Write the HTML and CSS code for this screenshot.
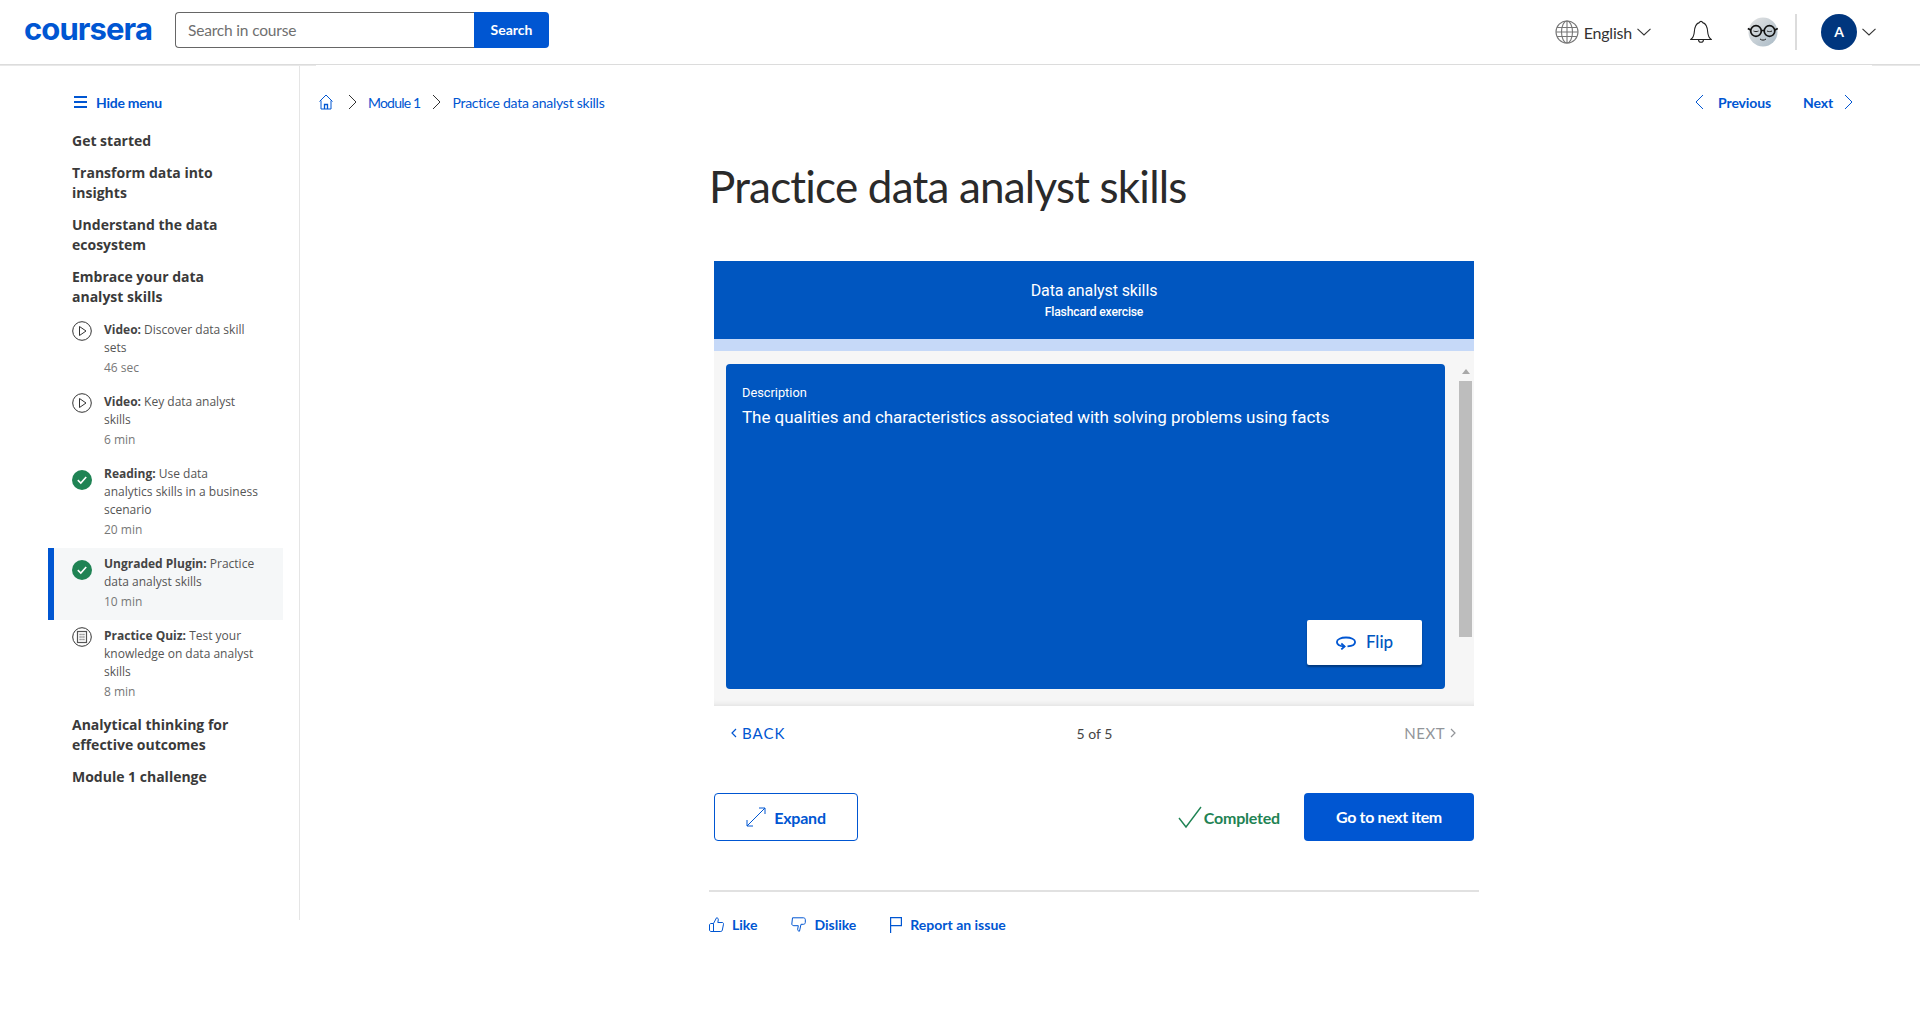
FILE: index.html
```html
<!DOCTYPE html>
<html lang="en">
<head>
    <meta charset="UTF-8">
    <title>Practice data analyst skills | Coursera</title>
    <link rel="stylesheet" href="styles.css">
</head>
<body>
    <header class="topbar">
        <div class="logo">coursera</div>
        <form class="search">
            <div class="search-input">Search in course</div>
            <div class="search-btn">Search</div>
        </form>
        <div class="top-right">
            <div class="lang">
                <svg width="24" height="24" viewBox="0 0 24 24" fill="none" stroke="#777" stroke-width="1.1"><circle cx="12" cy="12" r="11"/><ellipse cx="12" cy="12" rx="5.5" ry="11"/><path d="M12 1v22M2 7.5h20M1 12h22M2 16.5h20"/></svg>
                <span>English</span>
                <svg class="caret" width="14" height="8" viewBox="0 0 14 8" fill="none" stroke="#333" stroke-width="1.1"><path d="M.5.8 7 7l6.500-6.200"/></svg>
            </div>
            <svg class="bell" width="22" height="24" viewBox="0 0 22 24" fill="none" stroke="#222" stroke-width="1.1"><path d="M.8 19.500c2.500-2 3.200-3.500 3.500-7.500C4.600 7 6 3.500 9.300 2.600a1.800 1.800 0 0 1 3.400 0C16 3.500 17.400 7 17.700 12c.3 4 1 5.500 3.500 7.500z"/><path d="M8.500 19.500a2.500 2.800 0 0 0 5 0"/></svg>
            <svg class="coach" width="32" height="30" viewBox="0 0 32 30">
                <defs><linearGradient id="face" x1="0" y1="0" x2="1" y2="1"><stop offset="0" stop-color="#e4e4e4"/><stop offset="1" stop-color="#a9bac6"/></linearGradient></defs>
                <circle cx="16" cy="15" r="14.500" fill="url(#face)"/>
                <g fill="none" stroke="#111" stroke-width="1.700"><circle cx="9" cy="14" r="5.300"/><circle cx="22.500" cy="14" r="5.300"/><path d="M14.300 13.500h3M3.700 13 .8 11.500M27.800 13l3-1.500"/></g>
                <path d="M6.500 14c1.500.8 3.500.8 5 0M20 14c1.500.8 3.500.8 5 0M13 22c2 1.500 4 1.500 6 0" fill="none" stroke="#222" stroke-width="1"/>
            </svg>
            <div class="divider"></div>
            <div class="avatar">A</div>
            <svg class="caret-user" width="14" height="8" viewBox="0 0 14 8" fill="none" stroke="#333" stroke-width="1.1"><path d="M.5.8 7 7l6.500-6.200"/></svg>
        </div>
    </header>

    <div class="page">
        <aside class="sidebar">
            <div class="hide-menu">
                <svg width="13" height="12" viewBox="0 0 13 12" fill="#0056d2"><path d="M0 0h13v2H0zM0 5h13v2H0zM0 10h13v2H0z"/></svg>
                <span>Hide menu</span>
            </div>
            <div class="lesson">Get started</div>
            <div class="lesson">Transform data into insights</div>
            <div class="lesson">Understand the data ecosystem</div>
            <div class="lesson last">Embrace your data analyst skills</div>

            <div class="item">
                <svg class="item-icon" viewBox="0 0 20 20" fill="none" stroke="#333"><circle cx="10" cy="10" r="9.300"/><path d="M7.500 5.500v9l6.500-4.500z"/></svg>
                <div class="item-text"><p><b>Video:</b> Discover data skill sets</p><small>46 sec</small></div>
            </div>
            <div class="item">
                <svg class="item-icon" viewBox="0 0 20 20" fill="none" stroke="#333"><circle cx="10" cy="10" r="9.300"/><path d="M7.500 5.500v9l6.500-4.500z"/></svg>
                <div class="item-text"><p><b>Video:</b> Key data analyst skills</p><small>6 min</small></div>
            </div>
            <div class="item">
                <svg class="item-icon check" viewBox="0 0 20 20"><circle cx="10" cy="10" r="10" fill="#1f8354"/><path d="M5.800 10.200 8.800 13l5.400-6" fill="none" stroke="#fff" stroke-width="1.600"/></svg>
                <div class="item-text"><p><b>Reading:</b> Use data analytics skills in a business scenario</p><small>20 min</small></div>
            </div>
            <div class="item active">
                <svg class="item-icon check" viewBox="0 0 20 20"><circle cx="10" cy="10" r="10" fill="#1f8354"/><path d="M5.800 10.200 8.800 13l5.400-6" fill="none" stroke="#fff" stroke-width="1.600"/></svg>
                <div class="item-text"><p><b>Ungraded Plugin:</b> Practice data analyst skills</p><small>10 min</small></div>
            </div>
            <div class="item">
                <svg class="item-icon" viewBox="0 0 20 20" fill="none" stroke="#333"><circle cx="10" cy="10" r="9.300"/><rect x="5.500" y="4.500" width="9" height="11" stroke="#555" stroke-width="1.200"/><path d="M7.500 7.500h5M7.500 10h5M7.500 12.500h5" stroke="#777" stroke-width="1.300" stroke-dasharray="1.200 .7"/></svg>
                <div class="item-text"><p><b>Practice Quiz:</b> Test your knowledge on data analyst skills</p><small>8 min</small></div>
            </div>

            <div class="lesson after">Analytical thinking for effective outcomes</div>
            <div class="lesson">Module 1 challenge</div>
        </aside>

        <main class="content">
            <div class="crumbs">
                <nav class="breadcrumb">
                    <svg width="14" height="16" viewBox="0 0 14 16" fill="none" stroke="#0056d2"><path d="M.5 7.500 7 1l6.500 6.500M2 6.500v8.500h10V6.500"/><path d="M5.500 15v-4.500h3V15" stroke-width="1.300"/></svg>
                    <svg class="sep" width="9" height="16" viewBox="0 0 9 16" fill="none" stroke="#333"><path d="m1 1 7 7-7 7"/></svg>
                    <a class="module">Module 1</a>
                    <svg class="sep" width="9" height="16" viewBox="0 0 9 16" fill="none" stroke="#333"><path d="m1 1 7 7-7 7"/></svg>
                    <a>Practice data analyst skills</a>
                </nav>
                <div class="pager">
                    <a class="prev"><svg width="9" height="16" viewBox="0 0 9 16" fill="none" stroke="#0056d2"><path d="M8 1 1 8l7 7"/></svg>Previous</a>
                    <a class="following">Next<svg width="9" height="16" viewBox="0 0 9 16" fill="none" stroke="#0056d2"><path d="m1 1 7 7-7 7"/></svg></a>
                </div>
            </div>

            <div class="column">
                <h1>Practice data analyst skills</h1>

                <section class="player">
                    <div class="player-head">
                        <div class="player-title">Data analyst skills</div>
                        <div class="player-sub">Flashcard exercise</div>
                    </div>
                    <div class="progress"></div>
                    <div class="stage">
                        <div class="card">
                            <div class="card-label">Description</div>
                            <div class="card-text">The qualities and characteristics associated with solving problems using facts</div>
                            <div class="flip">
                                <svg width="20" height="14" viewBox="0 0 20 14" fill="none" stroke="#0056d2" stroke-width="1.800"><path d="M11.500 10.300c4.500-.3 7.600-2 7.600-4.400C19.100 3.300 15 1.500 10 1.500S.9 3.300.9 5.900c0 2.300 3 4.100 7.600 4.500"/><path d="m5.300 7.500 3.300 2.900-3.300 3"/></svg>
                                <span>Flip</span>
                            </div>
                        </div>
                        <div class="scroll">
                            <div class="scroll-arrow"></div>
                            <div class="scroll-thumb"></div>
                        </div>
                    </div>
                    <div class="player-nav">
                        <span class="back"><svg width="6" height="10" viewBox="0 0 6 10" fill="none" stroke="#0056d2" stroke-width="1.200"><path d="M5 1 1 5l4 4"/></svg>BACK</span>
                        <span class="count">5 of 5</span>
                        <span class="next">NEXT<svg width="6" height="10" viewBox="0 0 6 10" fill="none" stroke="#929599" stroke-width="1.200"><path d="m1 1 4 4-4 4"/></svg></span>
                    </div>
                </section>

                <div class="actions">
                    <div class="expand">
                        <svg width="20" height="20" viewBox="0 0 20 20" fill="none" stroke="#0056d2"><path d="M1 19 19 1M13 1h6v6M1 13v6h6"/></svg>
                        <span>Expand</span>
                    </div>
                    <div class="done">
                        <svg width="24" height="24" viewBox="0 0 24 24" fill="none" stroke="#1f8354" stroke-width="1.400"><path d="m1 13 7 9L23 2"/></svg>
                        <span>Completed</span>
                    </div>
                    <div class="go-next">Go to next item</div>
                </div>

                <div class="feedback">
                    <a><svg width="15" height="15" viewBox="0 0 15 15" fill="none" stroke="#0056d2"><path d="M4.500 6.500 7.500 .8c1.300 0 2 .9 1.800 2L8.800 5.500h4.500c1 0 1.400.9 1.200 1.700l-1.200 6c-.2.800-.7 1.300-1.500 1.300H2c-.8 0-1.500-.7-1.500-1.500V8c0-.8.700-1.500 1.500-1.500zM4.500 6.500v8"/></svg>Like</a>
                    <a><svg width="15" height="15" viewBox="0 0 15 15" fill="none" stroke="#0056d2"><path d="M1.500.8h11c1 0 1.800.8 1.800 1.700v3c0 1-.8 1.800-1.800 1.800H10L8.500 14.200c-1.300 0-2-.9-1.800-2l.6-3.500H3C1.800 8.700.8 8 .8 7z"/></svg>Dislike</a>
                    <a><svg width="12" height="16" viewBox="0 0 12 16" fill="none" stroke="#0056d2" stroke-width="1.200"><path d="M.6 16V.6h10.800v8H.6"/></svg>Report an issue</a>
                </div>
            </div>
        </main>
    </div>
</body>
</html>
```

FILE: styles.css
```css
body {
    margin: 0;
    font-family: Lato, Arial, sans-serif;
    color: #1f1f1f;
    background: #fff;
}

a {
    color: #0056d2;
}

/* top bar */
.topbar {
    display: flex;
    align-items: center;
    height: 64px;
    padding: 0 44px 0 24px;
    border-bottom: 1px solid #dcdcdc;
}

.logo {
    width: 128px;
    margin: -6px 23px 0 0;
    font-family: Inter, sans-serif;
    font-size: 31px;
    font-weight: 700;
    letter-spacing: -.9px;
    line-height: 36px;
    color: #0056d2;
}

.search {
    display: flex;
    height: 36px;
    margin-top: -4px;
}

.search-input {
    box-sizing: border-box;
    width: 299px;
    border: 1px solid #666;
    border-right: none;
    border-radius: 4px 0 0 4px;
    padding-left: 12px;
    line-height: 34px;
    font-size: 15.5px;
    letter-spacing: -.18px;
    color: #6f6f6f;
}

.search-btn {
    width: 75px;
    background: #0056d2;
    border-radius: 0 4px 4px 0;
    color: #fff;
    text-align: center;
    font-size: 14px;
    font-weight: 700;
    line-height: 36px;
}

.top-right {
    display: flex;
    align-items: center;
    margin-left: auto;
}

.lang {
    display: flex;
    align-items: center;
    font-size: 16px;
    letter-spacing: -.2px;
    color: #333;
}

.lang span {
    margin: 0 5px;
}

.bell {
    margin-left: 39px;
}

.coach {
    margin-left: 35px;
}

.divider {
    width: 2px;
    height: 36px;
    margin: 0 24px 0 16px;
    background: #dcdcdc;
}

.avatar {
    width: 36px;
    height: 36px;
    border-radius: 50%;
    background: #00367e;
    color: #fff;
    text-align: center;
    line-height: 36px;
    font-size: 14px;
    font-weight: 700;
}

.caret-user {
    margin-left: 5px;
}

/* page */
.page {
    position: relative;
    display: flex;
    border-top: 1px solid #e8e8e8;
}

.page::before {
    content: "";
    position: absolute;
    top: -1px;
    left: 316px;
    right: 48px;
    height: 1px;
    background: #fff;
}

.sidebar {
    box-sizing: border-box;
    width: 300px;
    height: 854px;
    border-right: 1px solid #e5e5e5;
    padding: 28px 16px 0 48px;
    font-family: "Open Sans", sans-serif;
}

.hide-menu {
    display: flex;
    align-items: center;
    gap: 9px;
    height: 16px;
    padding-left: 26px;
    margin-bottom: 21px;
    font-family: Lato, sans-serif;
    font-size: 14px;
    font-weight: 700;
    letter-spacing: -.25px;
    color: #0056d2;
}

.lesson {
    width: 175px;
    margin: 0 0 12px 24px;
    font-size: 14px;
    font-weight: 700;
    line-height: 20px;
    color: #3a3a3a;
}

.lesson.last {
    margin-bottom: 7px;
}

.lesson.after {
    margin-top: 5px;
}

.item {
    display: flex;
    box-sizing: border-box;
    padding: 7px 0 9px 24px;
    font-size: 12px;
    line-height: 18px;
    color: #555;
}

.item.active {
    padding-left: 18px;
    border-left: 6px solid #0056d2;
    background: #f5f7f8;
}

.item p {
    margin: 0;
}

.item b {
    font-weight: 700;
    color: #444;
}

.item small {
    display: block;
    margin-top: 2px;
    font-size: 12px;
    color: #777;
}

.item-icon {
    flex: none;
    width: 20px;
    height: 20px;
    margin-right: 12px;
}

.item-icon.check {
    margin-top: 5px;
}

.item-text {
    width: 155px;
}

.content {
    flex: 1;
}

.crumbs {
    display: flex;
    justify-content: space-between;
    align-items: center;
    height: 16px;
    padding: 28px 67px 0 19px;
}

.breadcrumb,
.pager {
    display: flex;
    align-items: center;
    font-size: 14px;
}

.breadcrumb {
    letter-spacing: -.25px;
}

.breadcrumb .module {
    letter-spacing: -.8px;
}

.breadcrumb .sep {
    margin: 0 11px 0 15px;
}

.breadcrumb .module + .sep {
    margin-left: 12px;
}

.pager {
    gap: 32px;
    font-weight: 700;
    letter-spacing: -.12px;
}

.pager a {
    display: flex;
    align-items: center;
}

.pager .prev {
    gap: 14px;
}

.pager .following {
    gap: 11px;
}

.column {
    width: 770px;
    margin-left: 409px;
}

h1 {
    margin: 0;
    padding-top: 49px;
    height: 102px;
    font-size: 44px;
    font-weight: 400;
    line-height: 54px;
    letter-spacing: -.8px;
    color: #2a2a2a;
}

/* flashcard */
.player {
    width: 760px;
    margin: 0 0 0 5px;
}

.player-head {
    box-sizing: border-box;
    height: 78px;
    background: #0056c0;
    color: #fff;
    text-align: center;
    font-family: Roboto, sans-serif;
    padding-top: 20px;
}

.player-title {
    font-size: 16px;
    line-height: 20px;
    letter-spacing: -.1px;
}

.player-sub {
    font-size: 12.2px;
    font-weight: 500;
    line-height: 16px;
    margin-top: 3px;
    letter-spacing: -.2px;
}

.progress {
    height: 12px;
    background: #c6d9f8;
}

.stage {
    display: flex;
    box-sizing: border-box;
    height: 355px;
    padding: 13px 0 0 12px;
    background: #f6f6f6;
    box-shadow: inset 0 -6px 6px -6px #d5d5d5;
}

.card {
    position: relative;
    box-sizing: border-box;
    width: 719px;
    height: 325px;
    padding: 20px 16px;
    border-radius: 4px;
    background: #0056c0;
    color: #fff;
    font-family: Roboto, sans-serif;
}

.card-label {
    font-size: 12.8px;
    line-height: 18px;
}

.card-text {
    margin-top: 4px;
    font-size: 17px;
    line-height: 22px;
    letter-spacing: -.03px;
}

.flip {
    position: absolute;
    right: 23px;
    bottom: 24px;
    display: flex;
    align-items: center;
    justify-content: center;
    gap: 10px;
    width: 115px;
    height: 45px;
    border-radius: 2px;
    background: #fff;
    box-shadow: 0 2px 2px rgba(0, 0, 0, .35);
    color: #0056c0;
    font-family: Lato, sans-serif;
    font-size: 17px;
    font-weight: 500;
    line-height: 20px;
}

.flip span {
    margin-top: -2px;
}

.scroll {
    width: 13px;
    margin-left: 14px;
}

.scroll-arrow {
    width: 0;
    height: 0;
    margin: 5px auto 7px;
    border: 4px solid transparent;
    border-top: 0;
    border-bottom: 5px solid #a8a8a8;
}

.scroll-thumb {
    height: 256px;
    background: #bdbdbd;
}

.player-nav {
    display: flex;
    align-items: center;
    justify-content: space-between;
    height: 54px;
    padding: 0 18px 2px 17px;
    font-size: 15px;
    letter-spacing: 1px;
}

.back,
.next {
    display: flex;
    align-items: center;
    gap: 5px;
    width: 75px;
    color: #0056d2;
    font-weight: 400;
}

.next {
    justify-content: flex-end;
    color: #929599;
    letter-spacing: .5px;
}

.count {
    padding-left: 2px;
    font-size: 14px;
    letter-spacing: 0;
    color: #444;
}

.actions {
    display: flex;
    align-items: center;
    width: 760px;
    margin: 31px 0 0 5px;
}

.expand {
    display: flex;
    align-items: center;
    justify-content: center;
    gap: 8px;
    box-sizing: border-box;
    width: 144px;
    height: 48px;
    border: 1px solid #0056d2;
    border-radius: 4px;
    color: #0056d2;
    font-size: 16px;
    font-weight: 700;
    letter-spacing: -.2px;
}

.done {
    display: flex;
    align-items: center;
    gap: 2px;
    margin-left: auto;
    color: #1f8354;
    font-size: 16px;
    font-weight: 700;
    letter-spacing: -.2px;
}

.go-next {
    width: 170px;
    margin-left: 24px;
    background: #0056d2;
    border-radius: 4px;
    color: #fff;
    text-align: center;
    font-size: 16px;
    font-weight: 700;
    letter-spacing: -.35px;
    line-height: 48px;
}

.feedback {
    display: flex;
    align-items: center;
    gap: 34px;
    margin-top: 49px;
    padding-top: 24px;
    border-top: 2px solid #e1e1e1;
    font-size: 14px;
    font-weight: 700;
}

.feedback a {
    display: flex;
    align-items: center;
    gap: 8px;
}
```
